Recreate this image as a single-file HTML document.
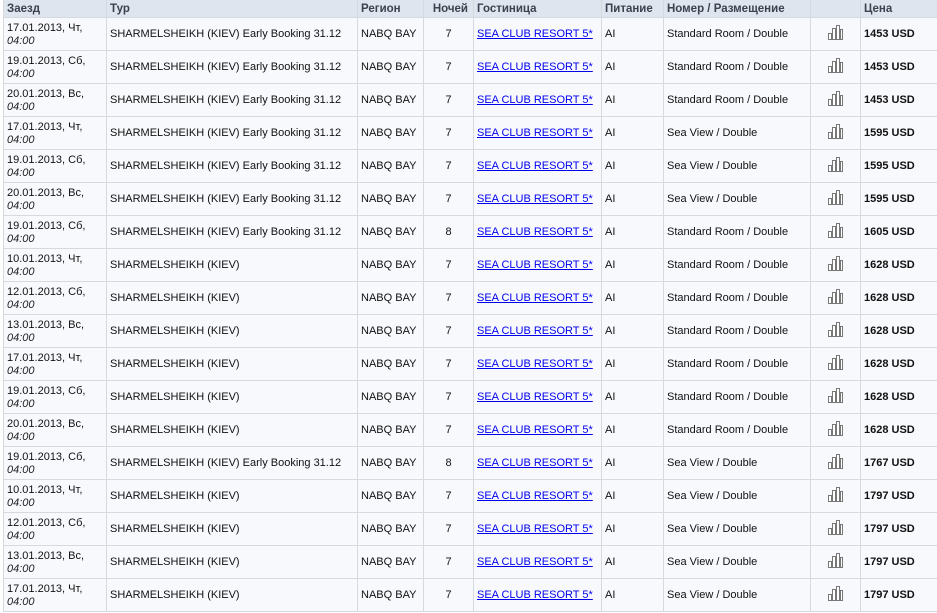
<!DOCTYPE html>
<html><head><meta charset="utf-8"><style>
body{margin:0;background:#fff;font-family:"Liberation Sans","DejaVu Sans",sans-serif;font-size:11px;color:#111;}
table{border-collapse:collapse;table-layout:fixed;width:937px;position:absolute;left:3px;top:-1px;}
td,th{border:1px solid #d6d9de;padding:0 0 0 3px;vertical-align:middle;white-space:nowrap;overflow:hidden;}
th{height:17px;background:#dfe5ee;color:#3a4250;text-align:left;font-weight:bold;font-size:11.5px;padding-top:1px;box-sizing:border-box;}
td{height:32px;background:#f8f9fd;}
tr td:first-child{vertical-align:top;padding-top:4px;height:28px;line-height:13px;}
i{color:#222;}
a{color:#0000ee;text-decoration:underline;}
.c{text-align:center;padding:0;}
b{font-weight:bold;}
</style></head><body>
<table>
<colgroup><col style="width:103px"><col style="width:251px"><col style="width:66px"><col style="width:50px"><col style="width:128px"><col style="width:62px"><col style="width:147px"><col style="width:50px"><col style="width:80px"></colgroup>
<tr style="height:18px"><th>Заезд</th><th>Тур</th><th>Регион</th><th style="text-align:right;padding-right:5px">Ночей</th><th>Гостиница</th><th>Питание</th><th>Номер / Размещение</th><th></th><th>Цена</th></tr>
<tbody id="b"></tbody>
</table>
<script>
var rows=[
["17.01.2013, Чт,","SHARMELSHEIKH (KIEV) Early Booking 31.12",7,"Standard Room / Double",1453],
["19.01.2013, Сб,","SHARMELSHEIKH (KIEV) Early Booking 31.12",7,"Standard Room / Double",1453],
["20.01.2013, Вс,","SHARMELSHEIKH (KIEV) Early Booking 31.12",7,"Standard Room / Double",1453],
["17.01.2013, Чт,","SHARMELSHEIKH (KIEV) Early Booking 31.12",7,"Sea View / Double",1595],
["19.01.2013, Сб,","SHARMELSHEIKH (KIEV) Early Booking 31.12",7,"Sea View / Double",1595],
["20.01.2013, Вс,","SHARMELSHEIKH (KIEV) Early Booking 31.12",7,"Sea View / Double",1595],
["19.01.2013, Сб,","SHARMELSHEIKH (KIEV) Early Booking 31.12",8,"Standard Room / Double",1605],
["10.01.2013, Чт,","SHARMELSHEIKH (KIEV)",7,"Standard Room / Double",1628],
["12.01.2013, Сб,","SHARMELSHEIKH (KIEV)",7,"Standard Room / Double",1628],
["13.01.2013, Вс,","SHARMELSHEIKH (KIEV)",7,"Standard Room / Double",1628],
["17.01.2013, Чт,","SHARMELSHEIKH (KIEV)",7,"Standard Room / Double",1628],
["19.01.2013, Сб,","SHARMELSHEIKH (KIEV)",7,"Standard Room / Double",1628],
["20.01.2013, Вс,","SHARMELSHEIKH (KIEV)",7,"Standard Room / Double",1628],
["19.01.2013, Сб,","SHARMELSHEIKH (KIEV) Early Booking 31.12",8,"Sea View / Double",1767],
["10.01.2013, Чт,","SHARMELSHEIKH (KIEV)",7,"Sea View / Double",1797],
["12.01.2013, Сб,","SHARMELSHEIKH (KIEV)",7,"Sea View / Double",1797],
["13.01.2013, Вс,","SHARMELSHEIKH (KIEV)",7,"Sea View / Double",1797],
["17.01.2013, Чт,","SHARMELSHEIKH (KIEV)",7,"Sea View / Double",1797]];
var ic='<svg width="17" height="17" viewBox="0 0 17 17"><g fill="#fff" stroke="#777" stroke-width="1"><rect x="1.5" y="9.5" width="3" height="6"/><rect x="5.5" y="4.5" width="3" height="11"/><rect x="9.5" y="1.5" width="3" height="14"/><rect x="13.5" y="5.5" width="2" height="10"/></g></svg>';
var h='';
rows.forEach(function(r){h+='<tr><td>'+r[0]+'<br><i>04:00</i></td><td>'+r[1]+'</td><td>NABQ BAY</td><td class="c">'+r[2]+'</td><td><a>SEA CLUB RESORT 5*</a></td><td>AI</td><td>'+r[3]+'</td><td class="c">'+ic+'</td><td><b>'+r[4]+' USD</b></td></tr>';});
document.getElementById('b').innerHTML=h;
</script>
</body></html>
